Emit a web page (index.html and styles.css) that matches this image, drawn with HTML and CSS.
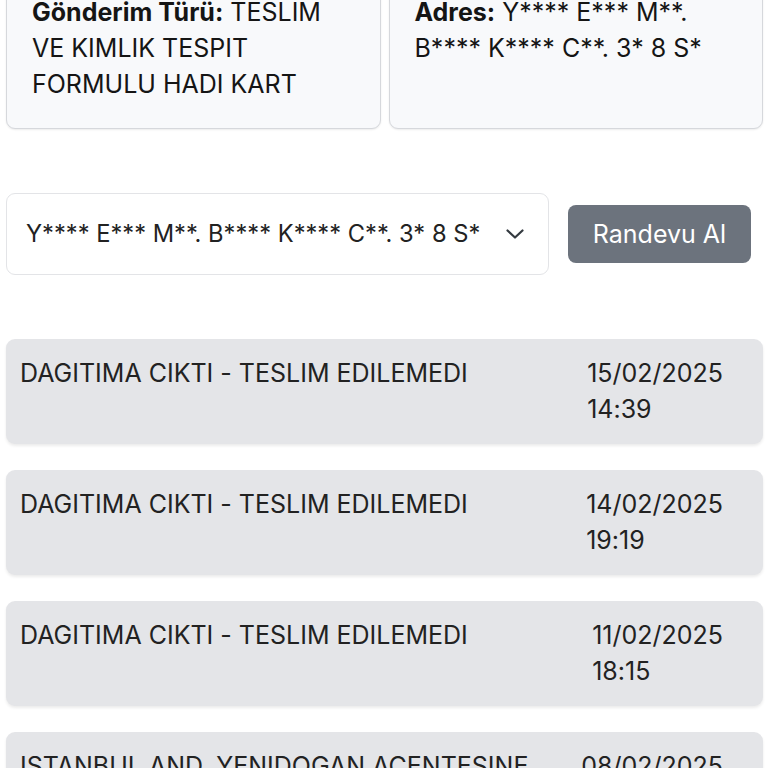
FILE: index.html
```html
<!DOCTYPE html>
<html lang="tr">
<head>
<meta charset="utf-8">
<link rel="stylesheet" href="styles.css">
</head>
<body>
<div class="page">
  <div class="info-grid">
    <div class="info-card"><b>Gönderim Türü:</b> TESLIM VE KIMLIK TESPIT FORMULU HADI KART</div>
    <div class="info-card"><b>Adres:</b> Y**** E*** M**. B**** K**** C**. 3* 8 S*</div>
  </div>

  <div class="appt-row">
    <div class="select">
      <span class="select-text">Y**** E*** M**. B**** K**** C**. 3* 8 S*</span>
      <svg class="chev" width="18" height="10" viewBox="0 0 18 10"><path d="M1.5 1.5 L9 8.5 L16.5 1.5" fill="none" stroke="#343a40" stroke-width="2.2" stroke-linecap="round" stroke-linejoin="round"/></svg>
    </div>
    <button class="btn">Randevu Al</button>
  </div>

  <div class="list">
    <div class="item"><div class="desc">DAGITIMA CIKTI - TESLIM EDILEMEDI</div><div class="date">15/02/2025<br>14:39</div></div>
    <div class="item"><div class="desc">DAGITIMA CIKTI - TESLIM EDILEMEDI</div><div class="date">14/02/2025<br>19:19</div></div>
    <div class="item"><div class="desc">DAGITIMA CIKTI - TESLIM EDILEMEDI</div><div class="date">11/02/2025<br>18:15</div></div>
    <div class="item"><div class="desc">ISTANBUL AND. YENIDOGAN ACENTESINE ULASTI</div><div class="date">08/02/2025<br>10:42</div></div>
  </div>
</div>
</body>
</html>
```
FILE: styles.css
```css
html, body { margin: 0; padding: 0; background: #fff; }
body {
  font-family: Inter, "Liberation Sans", sans-serif;
  font-size: 25px;
  line-height: 36px;
  color: #1c1c1e;
  font-feature-settings: "calt" 0;
}
.page { padding: 0 5px 0 6px; margin-top: -31px; }
.info-grid {
  display: grid;
  grid-template-columns: 1fr 1fr;
  gap: 8px;
}
.info-card {
  background: #f8f9fb;
  border: 1px solid #d6d8dc;
  border-radius: 9px;
  padding: 24px 24px 26px 25px;
  box-shadow: 0 1px 2px rgba(0,0,0,0.08);
  color: #151515;
}
.info-card b { font-weight: 700; }
.appt-row {
  display: flex;
  align-items: center;
  gap: 19px;
  margin-top: 64px;
  padding-right: 12px;
}
.select {
  flex: 1;
  height: 80px;
  border: 1px solid #e3e4e7;
  border-radius: 9px;
  display: flex;
  align-items: center;
  justify-content: space-between;
  padding: 0 24px 0 19px;
  color: #222;
  white-space: nowrap;
  font-size: 23.7px;
}
.chev { display: block; flex: none; }
.btn {
  width: 183px;
  height: 58px;
  border: none;
  border-radius: 8px;
  background: #6c737d;
  color: #fff;
  font: inherit;
  padding: 0;
}
.list {
  display: flex;
  flex-direction: column;
  gap: 26px;
  margin-top: 64px;
}
.item {
  background: #e4e5e8;
  border-radius: 9px;
  box-shadow: 0 2px 3px rgba(0,0,0,0.08);
  display: flex;
  gap: 40px;
  padding: 16px 40px 17px 14px;
  color: #222;
}
.desc { flex: 1; }
.date { flex: none; }
```
